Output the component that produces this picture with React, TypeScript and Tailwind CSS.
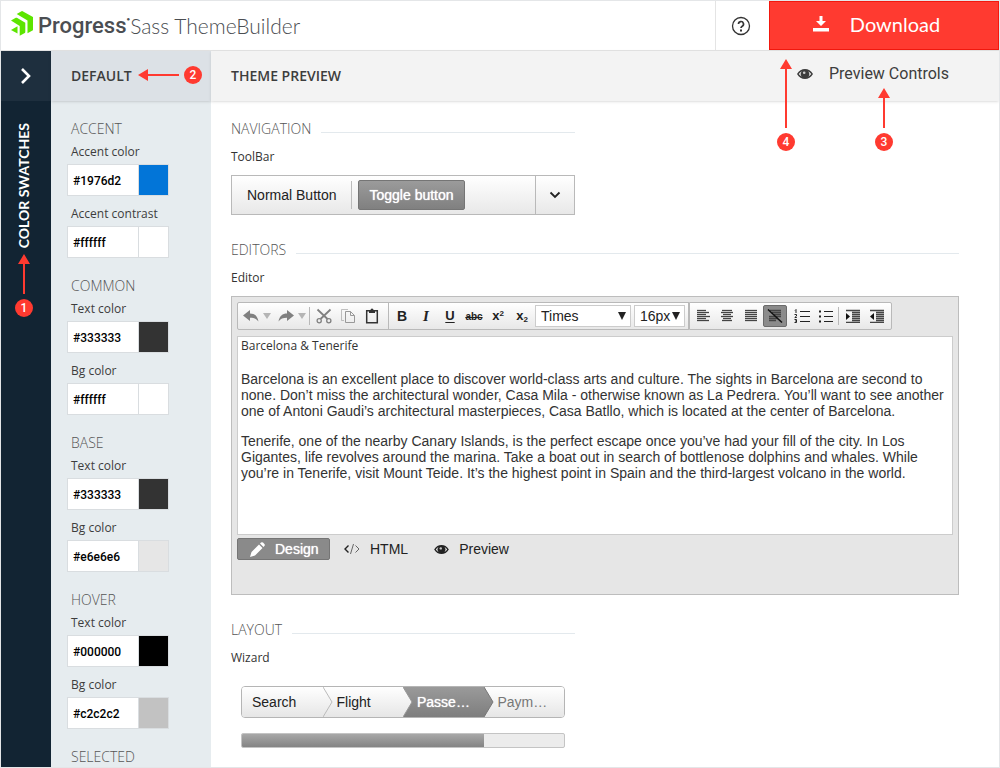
import type { ReactNode } from "react";

function Eye({ className }: { className?: string }) {
  return (
    <svg viewBox="0 0 16 12" className={className} aria-hidden="true">
      <path fillRule="evenodd" fill="currentColor" d="M0 6C2 2.600 4.800 1 8 1s6 1.600 8 5c-2 3.400-4.800 5-8 5S2 9.400 0 6Zm1.800 0c.8 1.200 1.800 2.200 3 2.800A4.300 4.300 0 0 1 4.800 3.200C3.600 3.800 2.600 4.800 1.800 6Zm12.400 0c-.8-1.200-1.800-2.200-3-2.800a4.300 4.300 0 0 1 0 5.600c1.200-.6 2.200-1.600 3-2.800Z" />
      <circle cx="7.200" cy="4.800" r="1.300" fill="#fff" fillOpacity=".75" />
    </svg>
  );
}

function Field({ id, label, value, color }: { id: string; label: string; value: string; color: string }) {
  return (
    <div>
      <label htmlFor={id} className="block h-[23px] pl-1 text-[12px] leading-[22px] text-[#3d3d3d]">{label}</label>
      <div className="flex h-8 w-[102px] border border-[#d9dde0] bg-white">
        <input id={id} defaultValue={value} className="w-[71px] border-r border-[#d9dde0] bg-white pt-0.5 pl-[5px] font-['Roboto',sans-serif] text-[12px] font-medium text-black outline-none" />
        <button type="button" aria-label={`Pick ${label}`} className="flex-1" style={{ backgroundColor: color }} />
      </div>
    </div>
  );
}

const groups = [
  { name: "ACCENT", fields: [["Accent color", "#1976d2", "#0275d8"], ["Accent contrast", "#ffffff", "#ffffff"]] },
  { name: "COMMON", fields: [["Text color", "#333333", "#333333"], ["Bg color", "#ffffff", "#ffffff"]] },
  { name: "BASE", fields: [["Text color", "#333333", "#333333"], ["Bg color", "#e6e6e6", "#e6e6e6"]] },
  { name: "HOVER", fields: [["Text color", "#000000", "#000000"], ["Bg color", "#c2c2c2", "#c2c2c2"]] },
  { name: "SELECTED", fields: [] },
];

function Section({ title, label, wide, children }: { title: string; label: string; wide?: boolean; children: ReactNode }) {
  return (
    <section className={wide ? "w-full" : "w-[344px] max-w-full"}>
      <div className="flex h-6 items-center gap-2.5">
        <h2 className="text-[14px] font-light text-[#555]">{title}</h2>
        <div className="mt-2 h-px flex-1 bg-[#e3e9ed]" />
      </div>
      <h3 className="mt-[7px] mb-2 h-5 text-[12px] leading-5 text-[#333]">{label}</h3>
      {children}
    </section>
  );
}

function Tool({ label, active, children }: { label: string; active?: boolean; children: ReactNode }) {
  return (
    <button
      type="button"
      aria-label={label}
      className={
        active
          ? "mr-[3px] flex h-[22px] w-6 items-center justify-center rounded-xs border border-[#6b6b6b] bg-[#8b8b8b] text-[#333]"
          : "flex h-[22px] w-6 items-center justify-center text-[#222]"
      }
    >
      {children}
    </button>
  );
}

function Arrow({ label }: { label: string }) {
  return (
    <button type="button" aria-label={label} className="flex w-[11px] items-center">
      <svg viewBox="0 0 8 6" className="h-1.5 w-2"><path d="M0 0h8L4 6Z" fill="#b5b5b5" /></svg>
    </button>
  );
}

function Lines({ rows }: { rows: number[][] }) {
  return (
    <svg viewBox="0 0 16 14" className="h-3.5 w-4" aria-hidden="true" stroke="#444" strokeWidth="1.300">
      {rows.map(([x1, x2], i) => (
        <line key={i} x1={x1} x2={x2} y1={1.5 + i * 2} y2={1.5 + i * 2} />
      ))}
    </svg>
  );
}

const group = "flex items-center border border-[#b9b9b9] bg-linear-to-b from-white to-[#e8e8e8]";

function Badge({ n }: { n: number }) {
  return (
    <span className="flex h-[18px] w-[18px] shrink-0 items-center justify-center rounded-full bg-[#ff3a30] font-['Roboto',sans-serif] text-[12px] font-medium text-white">{n}</span>
  );
}

function UpArrow({ className }: { className: string }) {
  return (
    <svg viewBox="0 0 12 40" preserveAspectRatio="xMidYMin slice" className={className} aria-hidden="true">
      <path d="M6 0 12 10H7V100H5V10H0Z" fill="#ff3a30" />
    </svg>
  );
}

const steps = [
  { name: "Search", state: "done" },
  { name: "Flight", state: "done" },
  { name: "Passe…", state: "current" },
  { name: "Paym…", state: "next" },
];

export default function App() {
  return (
    <div className="relative flex h-screen flex-col overflow-hidden border border-[#e4e6e8] bg-white font-['Open_Sans',sans-serif]">
      <header className="flex h-[50px] shrink-0 border-b border-[#e4e4e4]">
        <a href="#home" className="flex flex-1 items-center pl-[10px] text-[#4b4e52]">
          <svg viewBox="0 0 23 25" className="mr-1 mb-1 h-[25px] w-[23px]" aria-hidden="true" fill="#5ce500">
            <path d="M5.700 3 10.500.2a1.200 1.200 0 0 1 1.100 0L22 6V18.600a1 1 0 0 1-.5.900L16.500 22.300V9.500Z" />
            <path d="M0 9.600 4.800 6.800a1.200 1.200 0 0 1 1.100 0L14.300 11.800v9.300a1 1 0 0 1-.5.900L8.700 24.700V15Z" />
            <path d="M0 19 6.500 15.200v7.300Z" />
          </svg>
          <span className="font-['Roboto',sans-serif] text-[22px] leading-8 font-medium">Progress</span>
          <span className="mb-3 text-[6px]">●</span>
          <span className="font-['Lato',sans-serif] text-[21px] leading-8 font-light">Sass ThemeBuilder</span>
        </a>
        <button type="button" aria-label="Help" className="flex w-[54px] items-center justify-center border-l border-[#e4e4e4] pr-1 text-[#333]">
          <svg viewBox="0 0 20 20" className="h-5 w-5" fill="none" stroke="currentColor" strokeWidth="1.300">
            <circle cx="10" cy="10" r="8.500" />
            <path d="M7.500 8a2.500 2.500 0 1 1 3.700 2.200c-.8.500-1.200.900-1.200 1.900" strokeWidth="1.700" />
            <path d="M9 13.500h2v2H9Z" fill="currentColor" stroke="none" />
          </svg>
        </button>
        <button type="button" className="flex w-[230px] items-center justify-center gap-5 border border-[#f2180e] bg-[#ff3a30] pr-4 pb-1 font-['Lato',sans-serif] text-[20px] text-white">
          <svg viewBox="0 0 18 18" className="h-[18px] w-[18px]" fill="currentColor" aria-hidden="true">
            <path d="M7.500 1h3v5H14l-5 5-5-5h3.500ZM1 13h16v3.500H1Z" />
          </svg>
          Download
        </button>
      </header>

      <div className="flex min-h-0 flex-1">
        <nav className="flex w-[50px] shrink-0 flex-col bg-[#122433]">
          <button type="button" aria-label="Expand" className="flex h-[50px] items-center justify-center bg-[#1e2f3e] text-white">
            <svg viewBox="0 0 12 18" className="h-[18px] w-3" fill="none" stroke="currentColor" strokeWidth="2.600"><path d="m2 2 7 7-7 7" /></svg>
          </button>
          <a href="#swatches" className="mt-[22px] mr-1 rotate-180 self-center font-['Lato',sans-serif] text-[14px] leading-5 font-bold text-white [writing-mode:vertical-rl]">COLOR SWATCHES</a>
        </nav>

        <aside className="flex w-[160px] shrink-0 flex-col bg-[#e6ecef]">
          <div className="z-10 flex h-[50px] shrink-0 items-center bg-[#dce1e6] pb-0.5 pl-5 text-[14px] font-semibold text-[#3d3d3d] shadow">DEFAULT</div>
          <div className="flex flex-col gap-4 pt-4 pl-4">
            {groups.map((g) => (
              <div key={g.name} className="flex flex-col gap-[7px]">
                <div>
                  <h2 className="h-6 pl-1 text-[14px] leading-6 font-light text-[#555]">{g.name}</h2>
                  {g.fields[0] && <Field id={`${g.name}-0`} label={g.fields[0][0]} value={g.fields[0][1]} color={g.fields[0][2]} />}
                </div>
                {g.fields[1] && <Field id={`${g.name}-1`} label={g.fields[1][0]} value={g.fields[1][1]} color={g.fields[1][2]} />}
              </div>
            ))}
          </div>
        </aside>

        <main className="flex min-w-0 flex-1 flex-col">
          <div className="z-10 flex h-[50px] shrink-0 items-center justify-between bg-[#f3f3f3] pr-[50px] pb-0.5 pl-5 text-[#3d3d3d] shadow">
            <h1 className="text-[14px] font-semibold">THEME PREVIEW</h1>
            <button type="button" className="flex items-center gap-4 pb-0.5 font-['Roboto',sans-serif] text-[16px]">
              <Eye className="h-3 w-4" />
              Preview Controls
            </button>
          </div>

          <div className="flex flex-col gap-[22px] pt-[15px] pr-10 pl-5">
            <Section title="NAVIGATION" label="ToolBar">
              <div className={`${group} h-10 pl-[15px] font-['Liberation_Sans',sans-serif] text-[14px]`}>
                <button type="button" className="text-[#222]">Normal Button</button>
                <div className="mr-1.5 ml-[15px] h-7 w-px bg-[#bcbcbc]" />
                <button type="button" aria-pressed="true" className="h-[30px] rounded-xs border border-[#757575] bg-linear-to-b from-[#9b9b9b] to-[#808080] px-2.5 text-white [text-shadow:0_0_1px_#fff]">Toggle button</button>
                <button type="button" aria-label="More" className="ml-auto flex h-full w-[39px] items-center justify-center border-l border-[#b9b9b9] text-[#222]">
                  <svg viewBox="0 0 12 8" className="h-2 w-3" fill="none" stroke="currentColor" strokeWidth="1.800"><path d="m1.500 1.500 4.500 4.500 4.500-4.500" /></svg>
                </button>
              </div>
            </Section>

            <Section title="EDITORS" label="Editor" wide>
              <div className="border border-[#bdbdbd] bg-[#e6e6e6] px-[5px] pt-[5px] pb-[34px] font-['Liberation_Sans',sans-serif]">
                <div className="flex h-7">
                  <div className={`${group} rounded-l-xs pr-1 pl-px`}>
                    <Tool label="Undo">
                      <svg viewBox="0 0 16 14" className="h-3.5 w-4" fill="#808080"><path d="M0 6.500 7 1v3.500c4.500 0 7.500 2.500 8.500 8C13.500 9.700 11 8.700 7 8.700V12Z" /></svg>
                    </Tool>
                    <Arrow label="Undo history" />
                    <Tool label="Redo">
                      <svg viewBox="0 0 16 14" className="h-3.5 w-4 -scale-x-100" fill="#808080"><path d="M0 6.500 7 1v3.500c4.500 0 7.500 2.500 8.500 8C13.500 9.700 11 8.700 7 8.700V12Z" /></svg>
                    </Tool>
                    <Arrow label="Redo history" />
                    <div className="mr-0.5 h-[18px] w-px bg-[#b9b9b9]" />
                    <Tool label="Cut">
                      <svg viewBox="0 0 16 16" className="h-4 w-4" fill="none" stroke="#808080" strokeWidth="1.300"><path d="M1.500 1.500 11.500 11M14.500 1.500 4.500 11" strokeWidth="1.800" /><circle cx="3.200" cy="12.700" r="2.100" /><circle cx="12.800" cy="12.700" r="2.100" /></svg>
                    </Tool>
                    <Tool label="Copy">
                      <svg viewBox="0 0 16 16" className="h-4 w-4" fill="none" stroke="#999"><path d="M8 1.500H1.500v11H4" strokeOpacity=".6" /><path d="M5.500 3.500h5l4 4v7h-9ZM10.500 3.500v4h4" /></svg>
                    </Tool>
                    <Tool label="Paste">
                      <svg viewBox="0 0 16 16" className="h-4 w-4" fill="none" stroke="#333" strokeWidth="1.500"><path d="M2.700 2.700h10.600v12H2.700Z" /><path d="M5 2h1.500a1.500 1.500 0 0 1 3 0H11v3H5Z" fill="#333" stroke="none" /></svg>
                    </Tool>
                  </div>
                  <div className={`${group} -ml-px pr-[3px] pl-px`}>
                    <Tool label="Bold"><span className="text-[14px] font-bold">B</span></Tool>
                    <Tool label="Italic"><span className="font-['Liberation_Serif',serif] text-[15px] font-bold italic">I</span></Tool>
                    <Tool label="Underline"><span className="text-[13px] font-bold underline underline-offset-2">U</span></Tool>
                    <Tool label="Strikethrough"><span className="text-[10px] font-bold line-through">abc</span></Tool>
                    <Tool label="Superscript"><span className="text-[13px] font-bold">x<sup className="text-[8px]">2</sup></span></Tool>
                    <Tool label="Subscript"><span className="text-[13px] font-bold">x<sub className="text-[8px]">2</sub></span></Tool>
                    <div className="relative ml-px">
                      <select aria-label="Font" className="h-[22px] w-24 appearance-none border border-[#ccc] bg-white pl-[5px] text-[14px] text-[#222]"><option>Times</option></select>
                      <svg viewBox="0 0 8 8" className="pointer-events-none absolute top-2 right-[5px] h-2 w-2"><path d="M0 0h8L4 8Z" fill="#222" /></svg>
                    </div>
                    <div className="relative ml-[3px]">
                      <select aria-label="Size" className="h-[22px] w-[51px] appearance-none border border-[#ccc] bg-white pl-[5px] text-[14px] text-[#222]"><option>16px</option></select>
                      <svg viewBox="0 0 8 8" className="pointer-events-none absolute top-2 right-[5px] h-2 w-2"><path d="M0 0h8L4 8Z" fill="#222" /></svg>
                    </div>
                  </div>
                  <div className={`${group} rounded-r-xs pr-0.5 pl-px`}>
                    <Tool label="Align left"><Lines rows={[[2, 11], [2, 14], [2, 11], [2, 15], [2, 11], [2, 14]]} /></Tool>
                    <Tool label="Align center"><Lines rows={[[3, 13], [2, 14], [4, 12], [2, 14], [4, 12], [3, 13]]} /></Tool>
                    <Tool label="Justify"><Lines rows={[[2, 14], [2, 14], [2, 14], [2, 14], [2, 14], [2, 14]]} /></Tool>
                    <Tool label="No alignment" active>
                      <svg viewBox="0 0 16 14" className="h-3.5 w-4" stroke="#444" strokeWidth="1.300"><path d="M3 1.500h11M5 3.500h9M7 5.500h7M2 7.500h12M2 9.500h9M2 11.500h7" /><path d="M1 .5 15 13.500" stroke="#111" strokeWidth="1.500" /></svg>
                    </Tool>
                    <Tool label="Numbered list">
                      <svg viewBox="0 0 16 14" className="h-3.5 w-4" stroke="#222" fill="none"><path d="M6 2.500h10M6 7.500h10M6 12.500h10" /><path d="M1 1.500 2 .5v3.500M.5 5.500h2v1.500L.8 8.500h2M.5 10.500h2v3h-2M1 12h1.500" /></svg>
                    </Tool>
                    <Tool label="Bulleted list">
                      <svg viewBox="0 0 16 14" className="h-3.5 w-4" stroke="#222"><path d="M6 2.500h9M6 7.500h9M6 12.500h9" /><path d="M1 2.500h2M1 7.500h2M1 12.500h2" strokeWidth="2" /></svg>
                    </Tool>
                    <div className="mr-0.5 h-[18px] w-px bg-[#b9b9b9]" />
                    <Tool label="Indent">
                      <svg viewBox="0 0 16 14" className="h-3.5 w-4" stroke="#444" strokeWidth="1.300"><path d="M1 1.500h14M7 3.500h8M7 5.500h8M7 7.500h8M7 9.500h8M7 11.500h8M1 13.500h14" /><path d="M1 4v7l4-3.500Z" fill="#111" stroke="none" /></svg>
                    </Tool>
                    <Tool label="Outdent">
                      <svg viewBox="0 0 16 14" className="h-3.5 w-4" stroke="#444" strokeWidth="1.300"><path d="M1 1.500h14M7 3.500h8M7 5.500h8M7 7.500h8M7 9.500h8M7 11.500h8M1 13.500h14" /><path d="M5 4v7L1 7.500Z" fill="#111" stroke="none" /></svg>
                    </Tool>
                  </div>
                </div>
                <div className="mt-1.5 h-[199px] border border-[#ccc] bg-white px-[3px] pt-px text-[14px] leading-4 text-[#333]">
                  <p className="font-['Open_Sans',sans-serif] text-[12px]">Barcelona &amp; Tenerife</p>
                  <p className="mt-[17px]">Barcelona is an excellent place to discover world-class arts and culture. The sights in Barcelona are second to none. Don’t miss the architectural wonder, Casa Mila - otherwise known as La Pedrera. You’ll want to see another one of Antoni Gaudi’s architectural masterpieces, Casa Batllo, which is located at the center of Barcelona.</p>
                  <p className="mt-3.5">Tenerife, one of the nearby Canary Islands, is the perfect escape once you’ve had your fill of the city. In Los Gigantes, life revolves around the marina. Take a boat out in search of bottlenose dolphins and whales. While you’re in Tenerife, visit Mount Teide. It’s the highest point in Spain and the third-largest volcano in the world.</p>
                </div>
                <div className="mt-[3px] flex h-[22px] items-center text-[14px] text-[#222]">
                  <button type="button" className="flex h-[22px] w-[93px] items-center gap-2.5 rounded-xs border border-[#757575] bg-[#8a8a8a] pl-3 text-white [text-shadow:0_0_1px_#fff]">
                    <svg viewBox="0 0 15 15" className="h-[15px] w-[15px]" fill="#fff"><path d="m0 15 1.500-5L9 2.500 12.500 6 5 13.500ZM10 1.500 11 .6a1.500 1.500 0 0 1 2 0l1.400 1.400a1.500 1.500 0 0 1 0 2L13.500 5Z" /></svg>
                    Design
                  </button>
                  <button type="button" className="ml-3.5 flex items-center gap-2.5">
                    <svg viewBox="0 0 16 12" className="h-3 w-4" fill="none" stroke="#222"><path d="M4.500 2.500 1 6l3.500 3.500" strokeWidth="1.400" /><path d="M9.500 1l-3 10M11.500 2.500 15 6l-3.500 3.500" stroke="#666" /></svg>
                    HTML
                  </button>
                  <button type="button" className="ml-[26px] flex items-center gap-2.5">
                    <Eye className="h-[11px] w-[15px]" />
                    Preview
                  </button>
                </div>
              </div>
            </Section>

            <Section title="LAYOUT" label="Wizard">
              <div className="px-2.5 pt-2.5 font-['Liberation_Sans',sans-serif] text-[14px]">
                <ol className="grid h-8 grid-cols-4 overflow-hidden rounded-sm border border-[#b5b5b5]">
                  {steps.map((s, i) => (
                    <li
                      key={s.name}
                      className={
                        s.state === "current"
                          ? "relative flex items-center bg-linear-to-b from-[#9a9a9a] to-[#7e7e7e] pl-3.5 text-white [text-shadow:0_0_1px_#fff]"
                          : s.state === "next"
                            ? "relative flex items-center bg-linear-to-b from-white to-[#e6e6e6] pl-3.5 text-[#777]"
                            : i === 0
                              ? "relative flex items-center bg-linear-to-b from-white to-[#e6e6e6] pl-2.5 text-[#222]"
                              : "relative flex items-center bg-linear-to-b from-white to-[#e6e6e6] pl-3.5 text-[#222]"
                      }
                    >
                      {s.name}
                      {i < 3 && (
                        <svg viewBox="0 0 10 30" className="absolute top-0 left-full z-10 h-[30px] w-2.5" aria-hidden="true">
                          <defs>
                            <linearGradient id={`step-${i}`} x1="0" y1="0" x2="0" y2="1">
                              <stop offset="0" stopColor={s.state === "current" ? "#9a9a9a" : "#fff"} />
                              <stop offset="1" stopColor={s.state === "current" ? "#7e7e7e" : "#e6e6e6"} />
                            </linearGradient>
                          </defs>
                          <path d="M0 0 9 15 0 30Z" fill={`url(#step-${i})`} />
                          <path d="M0 0 9 15 0 30" fill="none" stroke={s.state === "current" ? "#777" : i === 1 ? "#999" : "#bbb"} />
                        </svg>
                      )}
                    </li>
                  ))}
                </ol>
                <div role="progressbar" aria-label="Wizard progress" aria-valuenow={75} className="mt-[15px] h-[15px] overflow-hidden rounded-xs border border-[#c4c4c4] bg-[#ececec]">
                  <div className="h-full w-3/4 bg-linear-to-b from-[#a8a8a8] to-[#848484]" />
                </div>
              </div>
            </Section>
          </div>
        </main>
      </div>

      <div className="absolute top-[253px] left-[14px] z-20 flex flex-col items-center gap-[5px]">
        <UpArrow className="h-10 w-3" />
        <Badge n={1} />
      </div>
      <div className="absolute top-[65px] left-[137px] z-20 flex items-center gap-[5px]">
        <svg viewBox="0 0 41 12" className="h-3 w-[41px]" aria-hidden="true"><path d="M0 6 10 0v5h31v2H10v5Z" fill="#ff3a30" /></svg>
        <Badge n={2} />
      </div>
      <div className="absolute top-[87px] right-[106px] z-20 flex flex-col items-center gap-[5px]">
        <UpArrow className="h-10 w-3" />
        <Badge n={3} />
      </div>
      <div className="absolute top-[58px] right-[204px] z-20 flex flex-col items-center gap-[5px]">
        <svg viewBox="0 0 12 69" className="h-[69px] w-3" aria-hidden="true"><path d="M6 0 12 10H7V69H5V10H0Z" fill="#ff3a30" /></svg>
        <Badge n={4} />
      </div>
    </div>
  );
}
